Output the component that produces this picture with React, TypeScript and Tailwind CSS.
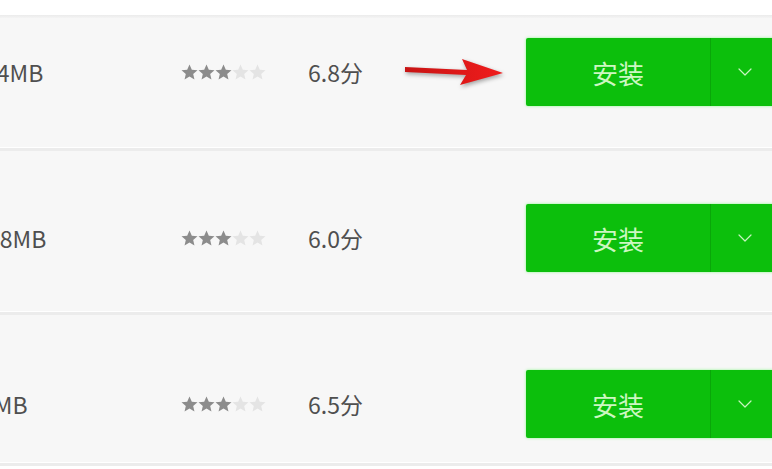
import { ChevronDown } from "lucide-react";

type Row = { size: string; shift: string; score: string; height: string; pad: string; arrow?: boolean };

const rows: Row[] = [
  { size: "14MB", shift: "-ml-[16px]", score: "6.8分", height: "h-[133px]", pad: "pt-[20px]", arrow: true },
  { size: "28MB", shift: "-ml-[13px]", score: "6.0分", height: "h-[164px]", pad: "pt-[53px]" },
  { size: "9MB", shift: "-ml-[19px]", score: "6.5分", height: "h-[151px]", pad: "pt-[55px]" },
];

const Star = ({ on }: { on: boolean }) => (
  <svg width="17" height="16" viewBox="1.5 1.5 21 20" className={on ? "fill-[#8c8c8c]" : "fill-[#e4e4e4]"}>
    <path d="M12 2l2.9 6.6 7.1.6-5.4 4.7 1.6 7L12 17.2 5.8 20.9l1.6-7L2 9.2l7.1-.6z" />
  </svg>
);

const Arrow = () => (
  <svg width="104" height="30" viewBox="0 0 104 30" className="drop-shadow-[1px_2px_2px_rgba(0,0,0,0.35)]">
    <defs>
      <linearGradient id="ar" x1="0" y1="0" x2="1" y2="0">
        <stop offset="0" stopColor="#c81414" />
        <stop offset="1" stopColor="#f01c1c" />
      </linearGradient>
    </defs>
    <path d="M2 10 L64 13 L59 2 L100 16 L57 28 L63 18 L2 15 Z" fill="url(#ar)" />
  </svg>
);

const RowItem = ({ row }: { row: Row }) => (
  <div className={`${row.height} ${row.pad} bg-[#f7f7f7] border-b-[3px] border-[#ececec] shadow-[inset_0_-1px_0_#fff]`}>
    <div className="h-[68px] flex items-center">
      <div className="w-[181px] shrink-0 flex">
        <span className={`${row.shift} text-[23px] text-[#4f4f4f] whitespace-nowrap`}>{row.size}</span>
      </div>
      <div className="w-[127px] shrink-0 flex">
        <Star on />
        <Star on />
        <Star on />
        <Star on={false} />
        <Star on={false} />
      </div>
      <span className="w-[95px] shrink-0 text-[23px] text-[#4f4f4f]">{row.score}</span>
      <div className="w-[123px] shrink-0 flex items-center">
        {row.arrow && <Arrow />}
      </div>
      <div className="h-[68px] w-[260px] shrink-0 flex bg-[#0cbf0c] rounded-[2px] shadow-[0_0_3px_#8bf58b]">
        <div className="w-[185px] flex items-center justify-center text-[26px] text-[#cdf7c2] border-r border-[#0aa60a]">
          安装
        </div>
        <div className="w-[68px] flex items-center justify-center text-[#c8f5c0]">
          <ChevronDown size={24} strokeWidth={1.2} />
        </div>
      </div>
    </div>
  </div>
);

export default function App() {
  return (
    <div
      className="w-[772px] h-[469px] overflow-hidden bg-white"
      style={{ fontFamily: '"Noto Sans CJK SC", "Liberation Sans", sans-serif' }}
    >
      <div className="h-[15px] bg-white" />
      <div className="h-[3px] bg-gradient-to-b from-[#ebebeb] to-[#f4f4f4]" />
      {rows.map((r) => (
        <RowItem key={r.score} row={r} />
      ))}
    </div>
  );
}
